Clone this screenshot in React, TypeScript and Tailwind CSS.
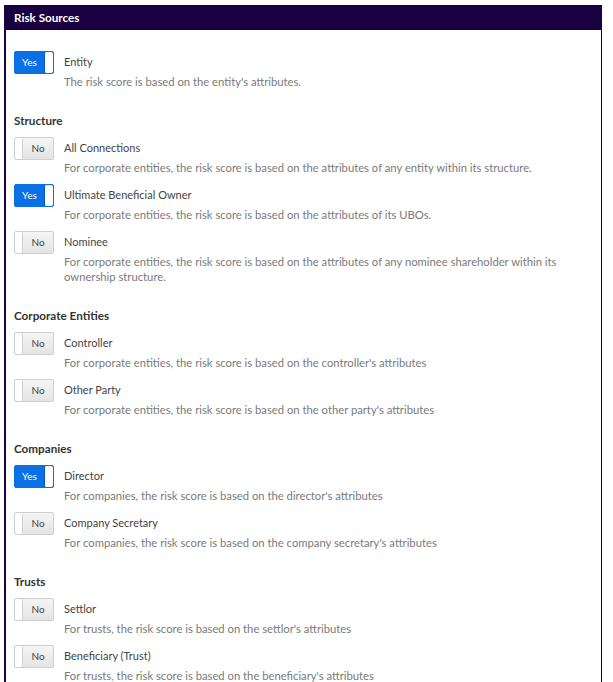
import React from "react";

type Item = { label: string; desc: string; on?: boolean };
type Section = { title?: string; items: Item[] };

const sections: Section[] = [
  {
    items: [
      { label: "Entity", desc: "The risk score is based on the entity's attributes.", on: true },
    ],
  },
  {
    title: "Structure",
    items: [
      {
        label: "All Connections",
        desc: "For corporate entities, the risk score is based on the attributes of any entity within its structure.",
      },
      {
        label: "Ultimate Beneficial Owner",
        desc: "For corporate entities, the risk score is based on the attributes of its UBOs.",
        on: true,
      },
      {
        label: "Nominee",
        desc: "For corporate entities, the risk score is based on the attributes of any nominee shareholder within its ownership structure.",
      },
    ],
  },
  {
    title: "Corporate Entities",
    items: [
      { label: "Controller", desc: "For corporate entities, the risk score is based on the controller's attributes" },
      { label: "Other Party", desc: "For corporate entities, the risk score is based on the other party's attributes" },
    ],
  },
  {
    title: "Companies",
    items: [
      { label: "Director", desc: "For companies, the risk score is based on the director's attributes", on: true },
      {
        label: "Company Secretary",
        desc: "For companies, the risk score is based on the company secretary's attributes",
      },
    ],
  },
  {
    title: "Trusts",
    items: [
      { label: "Settlor", desc: "For trusts, the risk score is based on the settlor's attributes" },
      { label: "Beneficiary (Trust)", desc: "For trusts, the risk score is based on the beneficiary's attributes" },
    ],
  },
];

function Toggle({ on }: { on?: boolean }) {
  if (on) {
    return (
      <div className="flex h-[23px] w-[40px] shrink-0 items-stretch rounded-[2px] border border-[#0a6fe0] bg-[#0b70e6]">
        <span className="flex flex-1 items-center justify-center text-[10px] text-white">Yes</span>
        <span className="w-[9px] rounded-[2px] border-l border-[#0857b8] bg-white" />
      </div>
    );
  }
  return (
    <div className="flex h-[23px] w-[40px] shrink-0 items-stretch rounded-[2px] border border-[#cfcfcf] bg-gradient-to-b from-[#f5f5f5] to-[#e4e4e4]">
      <span className="w-[8px] rounded-[2px] border-r border-[#d0d0d0] bg-white" />
      <span className="flex flex-1 items-center justify-center text-[10px] text-[#444]">No</span>
    </div>
  );
}

export default function App() {
  return (
    <div className="bg-white pl-[4px] pr-[11px] pt-[5px]" style={{ fontFamily: "Lato, 'Liberation Sans', sans-serif" }}>
      <div className="border-l-2 border-r border-[#1a0040]">
        <div className="flex h-[25px] items-center bg-[#1a0040] px-[8px] text-[11.7px] font-bold text-white">
          Risk Sources
        </div>
        <div className="flex flex-col gap-[24px] pb-[10px] pl-[8px] pr-[14px] pt-[21px]">
          {sections.map((s, i) => (
            <div key={i}>
              {s.title ? (
                <div className="mb-[10px] h-[14px] text-[11.7px] font-bold leading-[14px] text-[#333]">{s.title}</div>
              ) : null}
              <div className="flex flex-col gap-[9px]">
                {s.items.map((it) => (
                  <div key={it.label} className="flex gap-[10px]">
                    <Toggle on={it.on} />
                    <div className="flex-1">
                      <div className="h-[21px] text-[11px] leading-[21px] text-[#444]">{it.label}</div>
                      <div className="mt-[2px] text-[11.25px] leading-[15px] text-[#7a7a7a]">{it.desc}</div>
                    </div>
                  </div>
                ))}
              </div>
            </div>
          ))}
        </div>
      </div>
    </div>
  );
}
